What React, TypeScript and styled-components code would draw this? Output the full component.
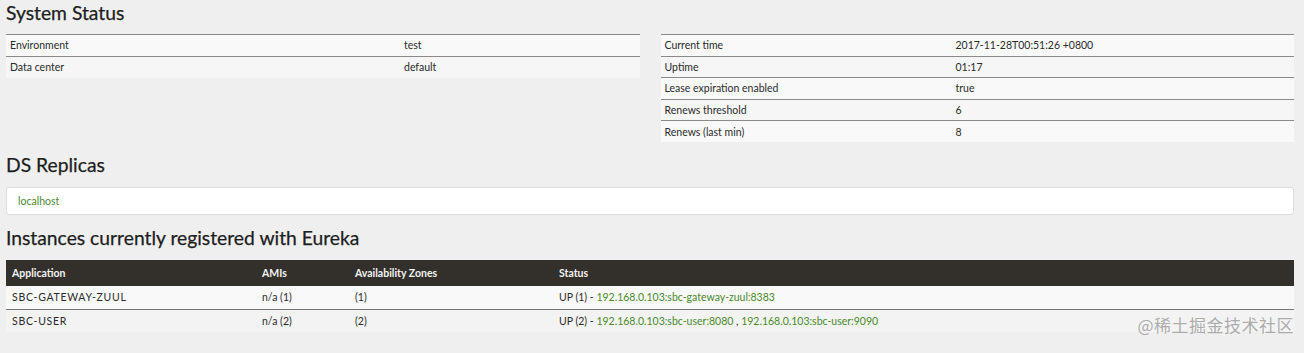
import styled, { createGlobalStyle } from "styled-components";

const GlobalStyle = createGlobalStyle`
  html, body {
    margin: 0;
    padding: 0;
    background-color: #efefef;
    font-family: Lato, "Liberation Sans", sans-serif;
    color: #333;
  }
`;

const Page = styled.div`
  position: relative;
  padding: 0 10px 20px 6px;
  min-height: 353px;
  box-sizing: border-box;
`;

const SectionTitle = styled.h2<{ $first?: boolean }>`
  margin: ${(props) => (props.$first ? "1px 0 9px" : "11px 0 10px")};
  font-size: 19.3px;
  line-height: 24px;
  font-weight: 400;
  color: #1e1e1e;
  -webkit-text-stroke: 0.25px #1e1e1e;
`;

const StatusGrid = styled.div`
  display: grid;
  grid-template-columns: 1fr 1fr;
  gap: 21px;
  align-items: start;
`;

const InfoTable = styled.table`
  width: 100%;
  border-collapse: collapse;
  border-top: 1px solid #8a8a8a;
  font-size: 10.5px;
`;

const InfoRow = styled.tr`
  background-color: #f6f6f6;

  &:nth-child(odd) {
    background-color: #f9f9f9;
  }

  & + & td {
    border-top: 1px solid #8a8a8a;
  }
`;

const InfoCell = styled.td<{ $width?: number }>`
  height: 21.5px;
  padding: 0 4px;
  box-sizing: border-box;
  width: ${(props) => (props.$width ? `${props.$width}px` : "auto")};
  color: #2b2b2b;
`;

const ReplicaBox = styled.div`
  height: 28px;
  box-sizing: border-box;
  background-color: #fff;
  border: 1px solid #dedede;
  border-radius: 3px;
  padding: 0 11px;
  display: flex;
  align-items: center;
  font-size: 10.5px;
`;

const Link = styled.a`
  color: #4a8a2c;
  text-decoration: none;
`;

const InstanceTable = styled.table`
  width: 100%;
  border-collapse: collapse;
  font-size: 10.5px;
`;

const HeadCell = styled.th<{ $width?: number }>`
  height: 26px;
  padding: 0 6px;
  text-align: left;
  font-weight: 700;
  color: #f2f2f2;
  background-color: #33302c;
  width: ${(props) => (props.$width ? `${props.$width}px` : "auto")};
  box-sizing: border-box;
`;

const InstanceRow = styled.tr`
  background-color: #f9f9f9;

  &:nth-child(even) {
    background-color: #f3f3f3;
  }

  & + & td {
    border-top: 1px solid #777;
  }
`;

const InstanceCell = styled.td<{ $caps?: boolean }>`
  height: 23px;
  padding: 0 6px;
  box-sizing: border-box;
  color: #2b2b2b;
  letter-spacing: ${(props) => (props.$caps ? "0.7px" : "normal")};
`;

const Watermark = styled.div`
  position: absolute;
  right: 10px;
  bottom: 17px;
  font-family: "Noto Sans CJK SC", sans-serif;
  font-size: 17px;
  color: rgba(110, 110, 110, 0.55);
  letter-spacing: 0.5px;
`;

const leftInfo = [
  ["Environment", "test"],
  ["Data center", "default"],
];

const rightInfo = [
  ["Current time", "2017-11-28T00:51:26 +0800"],
  ["Uptime", "01:17"],
  ["Lease expiration enabled", "true"],
  ["Renews threshold", "6"],
  ["Renews (last min)", "8"],
];

const instances = [
  {
    app: "SBC-GATEWAY-ZUUL",
    amis: "n/a (1)",
    zones: "(1)",
    status: "UP (1) - ",
    links: ["192.168.0.103:sbc-gateway-zuul:8383"],
  },
  {
    app: "SBC-USER",
    amis: "n/a (2)",
    zones: "(2)",
    status: "UP (2) - ",
    links: ["192.168.0.103:sbc-user:8080", "192.168.0.103:sbc-user:9090"],
  },
];

function Info({ rows, labelWidth }: { rows: string[][]; labelWidth: number }) {
  return (
    <InfoTable>
      <tbody>
        {rows.map(([label, value]) => (
          <InfoRow key={label}>
            <InfoCell $width={labelWidth}>{label}</InfoCell>
            <InfoCell>{value}</InfoCell>
          </InfoRow>
        ))}
      </tbody>
    </InfoTable>
  );
}

function App() {
  return (
    <>
      <GlobalStyle />
      <Page>
        <SectionTitle $first>System Status</SectionTitle>
        <StatusGrid>
          <Info rows={leftInfo} labelWidth={394} />
          <Info rows={rightInfo} labelWidth={291} />
        </StatusGrid>

        <SectionTitle>DS Replicas</SectionTitle>
        <ReplicaBox>
          <Link href="#">localhost</Link>
        </ReplicaBox>

        <SectionTitle>Instances currently registered with Eureka</SectionTitle>
        <InstanceTable>
          <thead>
            <tr>
              <HeadCell $width={250}>Application</HeadCell>
              <HeadCell $width={93}>AMIs</HeadCell>
              <HeadCell $width={204}>Availability Zones</HeadCell>
              <HeadCell>Status</HeadCell>
            </tr>
          </thead>
          <tbody>
            {instances.map((item) => (
              <InstanceRow key={item.app}>
                <InstanceCell $caps>{item.app}</InstanceCell>
                <InstanceCell>{item.amis}</InstanceCell>
                <InstanceCell>{item.zones}</InstanceCell>
                <InstanceCell>
                  {item.status}
                  {item.links.map((link, i) => (
                    <span key={link}>
                      {i > 0 && " , "}
                      <Link href="#">{link}</Link>
                    </span>
                  ))}
                </InstanceCell>
              </InstanceRow>
            ))}
          </tbody>
        </InstanceTable>
        <Watermark>@稀土掘金技术社区</Watermark>
      </Page>
    </>
  );
}

export default App;
